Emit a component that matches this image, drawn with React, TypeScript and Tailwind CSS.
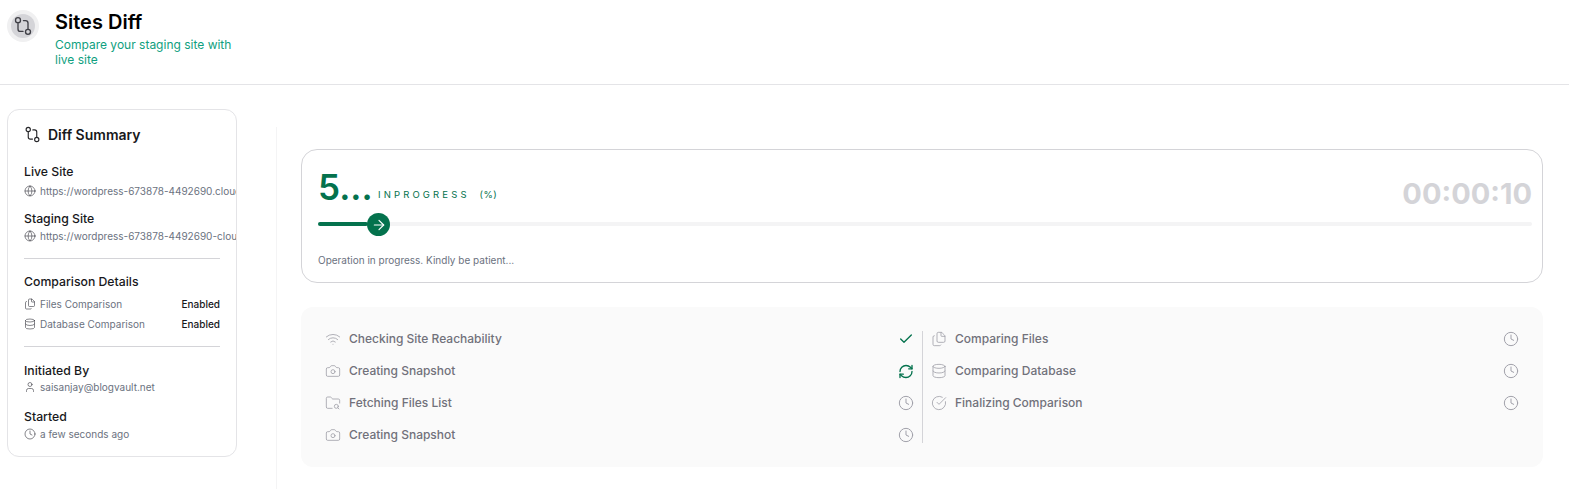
import React from "react";
import { ArrowRight, Check, Clock, Files, Database, FolderSearch, Globe, Camera, RefreshCw, User, Wifi, CircleCheckBig } from "lucide-react";

function DiffIcon({ size, className }: { size: number; className?: string }) {
  return (
    <svg width={size} height={size} viewBox="0 0 24 24" fill="none" stroke="currentColor" strokeWidth={1.6} strokeLinecap="round" strokeLinejoin="round" className={className}>
      <circle cx="6" cy="5" r="3" />
      <circle cx="18" cy="19" r="3" />
      <path d="M6 8v7.5a3 3 0 0 0 3 3h3" />
      <path d="M18 16V8.5a3 3 0 0 0-3-3h-2.5" />
    </svg>
  );
}

const left = [
  { icon: Wifi, label: "Checking Site Reachability", state: "done" },
  { icon: Camera, label: "Creating Snapshot", state: "run" },
  { icon: FolderSearch, label: "Fetching Files List", state: "wait" },
  { icon: Camera, label: "Creating Snapshot", state: "wait" },
];
const right = [
  { icon: Files, label: "Comparing Files", state: "wait" },
  { icon: Database, label: "Comparing Database", state: "wait" },
  { icon: CircleCheckBig, label: "Finalizing Comparison", state: "wait" },
];

function Step({ icon: Icon, label, state }: { icon: React.ElementType; label: string; state: string }) {
  return (
    <div className="flex h-8 items-center">
      <span className="mr-2 flex w-4 justify-center">
        <Icon size={16} strokeWidth={1.25} className="text-[#a1a1aa]" />
      </span>
      <span className="flex-1 text-[12px] font-medium text-[#71717a]">{label}</span>
      <span className="flex w-4 justify-center">
        {state === "done" && <Check size={16} strokeWidth={2} className="text-[#04724d]" />}
        {state === "run" && <RefreshCw size={17} strokeWidth={2} className="text-[#04724d]" />}
        {state === "wait" && <Clock size={18} strokeWidth={1.5} className="text-[#a1a1aa]" />}
      </span>
    </div>
  );
}

function Heading({ children }: { children: React.ReactNode }) {
  return <div className="text-[12.25px] leading-[18px] font-medium text-[#18181b]">{children}</div>;
}

function Meta({ icon: Icon, children, className = "mt-[2px]" }: { icon: React.ElementType; children: React.ReactNode; className?: string }) {
  return (
    <div className={`${className} flex h-4 items-center gap-[4px] overflow-hidden whitespace-nowrap text-[10px] text-[#6b7280]`}>
      <Icon size={12} strokeWidth={1.25} className="shrink-0 text-[#3f3f46]" />
      <span>{children}</span>
    </div>
  );
}

function Row({ icon: Icon, label }: { icon: React.ElementType; label: string }) {
  return (
    <div className="flex h-5 items-center gap-[4px] text-[10px] text-[#6b7280]">
      <Icon size={12} strokeWidth={1.25} className="text-[#3f3f46]" />
      <span className="flex-1">{label}</span>
      <span className="font-medium text-[#18181b]">Enabled</span>
    </div>
  );
}

export default function App() {
  return (
    <div className="h-[489px] overflow-hidden bg-white font-['Inter',sans-serif]">
      <header className="flex h-[85px] items-start border-b border-[#e4e4e7] pl-[7px] pt-[10px]">
        <div className="mr-4 flex h-8 w-8 items-center justify-center rounded-full bg-[#f0f0f1]">
          <div className="flex h-6 w-6 items-center justify-center rounded-full bg-[#d4d4d8]">
            <DiffIcon size={20} className="text-[#3f3f46]" />
          </div>
        </div>
        <div className="w-[190px]">
          <h1 className="text-[20px] leading-[24px] font-semibold text-black">Sites Diff</h1>
          <p className="mt-[3px] text-[12px] leading-[15px] text-[#10a080]">Compare your staging site with live site</p>
        </div>
      </header>

      <div className="flex">
        <aside className="w-[276px] shrink-0 pl-[7px] pt-6">
          <div className="h-[348px] w-[230px] rounded-xl border border-[#e4e4e7] px-4 pt-[14px]">
            <div className="flex h-5 items-center gap-[7px]">
              <DiffIcon size={17} className="text-[#27272a]" />
              <span className="text-[14px] font-semibold text-[#18181b]">Diff Summary</span>
            </div>
            <div className="mt-[19px]">
              <Heading>Live Site</Heading>
              <div className="-mr-4"><Meta icon={Globe}>https://wordpress-673878-4492690.cloudwaysapps.com</Meta></div>
            </div>
            <div className="mt-[11px]">
              <Heading>Staging Site</Heading>
              <div className="-mr-4"><Meta icon={Globe} className="mt-0">https://wordpress-673878-4492690-cloudwaysapps.com</Meta></div>
            </div>
            <div className="mt-[14px] border-t border-[#d4d4d8]" />
            <div className="mt-[14px]"><Heading>Comparison Details</Heading></div>
            <div className="mt-[3px]"><Row icon={Files} label="Files Comparison" /></div>
            <Row icon={Database} label="Database Comparison" />
            <div className="mt-[12px] border-t border-[#d4d4d8]" />
            <div className="mt-[15px]"><Heading>Initiated By</Heading></div>
            <Meta icon={User} className="-mt-px">saisanjay@blogvault.net</Meta>
            <div className="mt-[13px]"><Heading>Started</Heading></div>
            <Meta icon={Clock} className="mt-0">a few seconds ago</Meta>
          </div>
        </aside>

        <main className="mt-[42px] h-[400px] flex-1 border-l border-[#f4f4f5] pl-6 pr-[26px] pt-[22px]">
          <section className="h-[134px] rounded-2xl border border-[#d4d4d8] pl-4 pr-[10px] pt-[14px]">
            <div className="flex h-[52px] items-start justify-between">
              <div className="flex items-baseline">
                <span className="w-[55px] overflow-hidden text-[35px] leading-[46px] font-semibold whitespace-nowrap text-[#04724d]">5...</span>
                <span className="ml-[5px] -translate-y-[2px] text-[9.5px] tracking-[0.33em] text-[#04724d]">INPROGRESS</span>
                <span className="ml-[10px] -translate-y-[2px] text-[9.5px] tracking-[0.05em] text-[#04724d]">(%)</span>
              </div>
              <span className="mt-[10px] text-[29px] leading-[40px] font-bold text-[#d4d4d8]">00:00:10</span>
            </div>
            <div className="relative mt-[6px] h-1 rounded-full bg-[#f4f4f5]">
              <div className="h-1 w-[50px] rounded-full bg-[#04724d]" />
              <div className="absolute top-[-9px] left-[49px] flex h-[23px] w-[23px] items-center justify-center rounded-full bg-[#04724d]">
                <ArrowRight size={16} strokeWidth={1.75} className="text-white" />
              </div>
            </div>
            <p className="mt-[26px] text-[10px] leading-4 text-[#6b7280]">Operation in progress. Kindly be patient...</p>
          </section>

          <section className="mt-6 flex h-[160px] items-start rounded-xl bg-[#fafafa] pl-6 pr-6 pt-4">
            <div className="w-[589px] shrink-0">
              {left.map((s, i) => <Step key={i} {...s} />)}
            </div>
            <div className="mx-2 mt-2 h-[112px] w-px shrink-0 bg-[#d4d4d8]" />
            <div className="flex-1">
              {right.map((s, i) => <Step key={i} {...s} />)}
            </div>
          </section>
        </main>
      </div>
    </div>
  );
}
